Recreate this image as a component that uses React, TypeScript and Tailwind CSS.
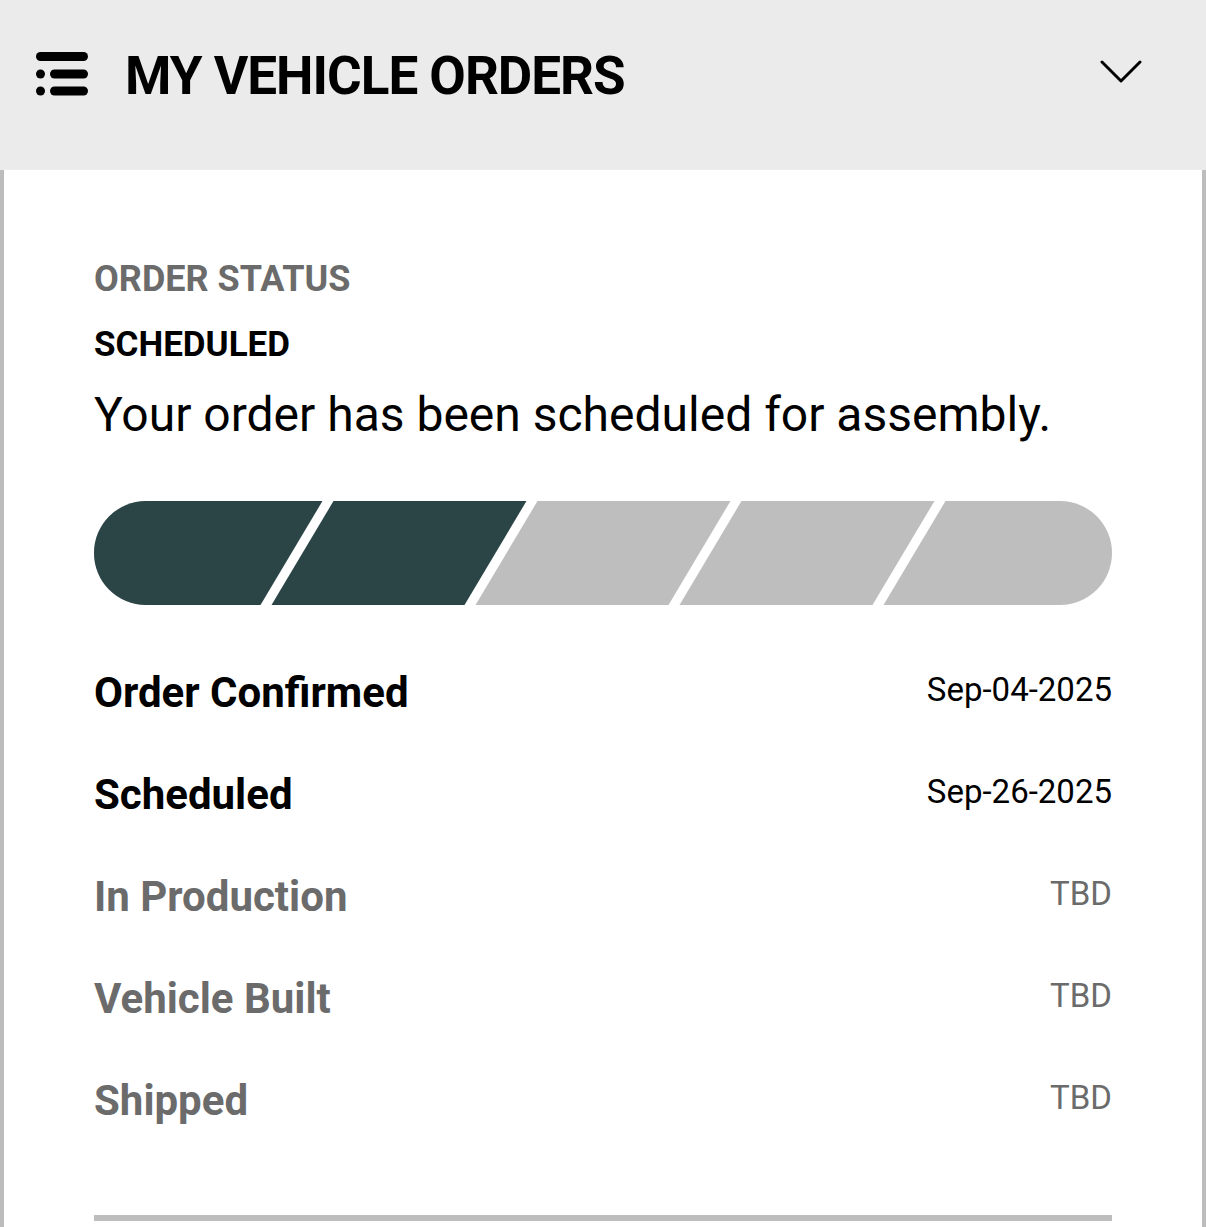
const steps = [
  { label: 'Order Confirmed', date: 'Sep-04-2025', done: true },
  { label: 'Scheduled', date: 'Sep-26-2025', done: true },
  { label: 'In Production', date: 'TBD', done: false },
  { label: 'Vehicle Built', date: 'TBD', done: false },
  { label: 'Shipped', date: 'TBD', done: false },
];

function ListIcon() {
  return (
    <svg width="52" height="44" viewBox="0 0 52 44" fill="#000">
      <rect x="0" y="0" width="52" height="9" rx="4.5" />
      <circle cx="4.5" cy="22" r="4.5" />
      <rect x="14" y="17.5" width="38" height="9" rx="4.5" />
      <circle cx="4.5" cy="39" r="4.5" />
      <rect x="14" y="34.5" width="38" height="9" rx="4.5" />
    </svg>
  );
}

function Chevron() {
  return (
    <svg width="42" height="24" viewBox="0 0 42 24" fill="none" stroke="#000" strokeWidth="3" strokeLinecap="round" strokeLinejoin="round">
      <polyline points="2,2 21,21 40,2" />
    </svg>
  );
}

function ProgressBar({ done }: { done: number }) {
  const w = 1018;
  const h = 104;
  const slant = 62;
  const tops = [234, 438, 642, 846];
  const gap = 11;
  const cut = tops[done - 1];
  return (
    <svg width={w} height={h} viewBox={`0 0 ${w} ${h}`} className="block">
      <defs>
        <clipPath id="pill">
          <rect x="0" y="0" width={w} height={h} rx={h / 2} />
        </clipPath>
      </defs>
      <g clipPath="url(#pill)">
        <rect x="0" y="0" width={w} height={h} fill="#bebebe" />
        <polygon points={`0,0 ${cut},0 ${cut - slant},${h} 0,${h}`} fill="#2b4547" />
        {tops.map((t) => (
          <polygon
            key={t}
            points={`${t - gap / 2},0 ${t + gap / 2},0 ${t - slant + gap / 2},${h} ${t - slant - gap / 2},${h}`}
            fill="#fff"
          />
        ))}
      </g>
    </svg>
  );
}

export default function App() {
  return (
    <div className="w-[1206px] h-[1227px] overflow-hidden bg-white" style={{ fontFamily: 'Roboto, "Noto Sans", sans-serif' }}>
      <div className="h-[170px] bg-[#ebebeb] flex items-start pt-[52px] pl-[36px] pr-[64px]">
        <ListIcon />
        <h1 className="ml-[37px] -mt-[2px] text-[53px] leading-[53px] font-bold text-black tracking-[-1px]">
          MY VEHICLE ORDERS
        </h1>
        <div className="ml-auto mt-[8px]">
          <Chevron />
        </div>
      </div>

      <div className="border-x-4 border-[#bdbdbd] px-[90px] pt-[91px] h-[1057px]">
        <div className="text-[36px] leading-[36px] font-bold text-[#6b6b6b]">ORDER STATUS</div>
        <div className="mt-[30px] text-[35px] leading-[35px] font-bold text-black">SCHEDULED</div>
        <div className="mt-[29px] text-[48px] leading-[48px] text-black">Your order has been scheduled for assembly.</div>

        <div className="mt-[62px]">
          <ProgressBar done={2} />
        </div>

        <div className="mt-[36px]">
          {steps.map((s) => (
            <div key={s.label} className="h-[102px] flex items-center justify-between">
              <span className={`text-[42px] font-bold ${s.done ? 'text-black' : 'text-[#6b6b6b]'}`}>{s.label}</span>
              <span className={`text-[33px] -mt-[4px] ${s.done ? 'text-black' : 'text-[#6b6b6b]'}`}>{s.date}</span>
            </div>
          ))}
        </div>

        <div className="mt-[64px] h-[6px] bg-[#bdbdbd]" />
      </div>
    </div>
  );
}
